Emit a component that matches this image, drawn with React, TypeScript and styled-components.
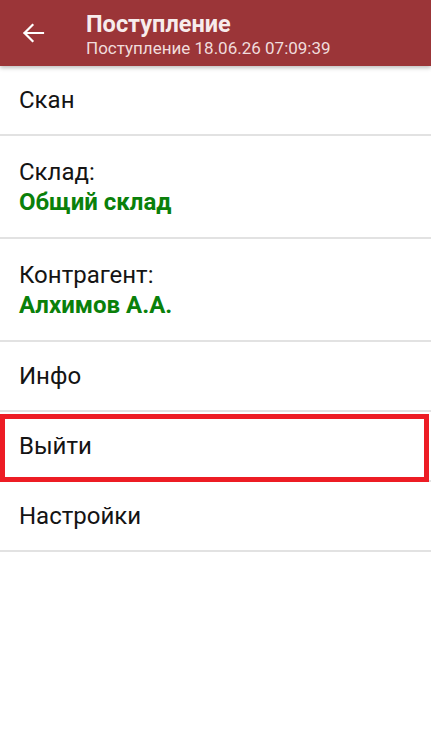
import styled, { createGlobalStyle } from "styled-components";

const GlobalStyle = createGlobalStyle`
    body {
        margin: 0;
        background: #ffffff;
        font-family: Roboto, "Noto Sans", sans-serif;
    }
`;

export default function App() {
    return (
        <Screen>
            <GlobalStyle />
            <Header>
                <BackButton aria-label="Назад">
                    <svg width="24" height="24" viewBox="0 0 24 24" fill="none">
                        <path d="M22 12H3.5M11.5 4l-8 8 8 8" stroke="#ffffff" strokeWidth="2.2" strokeLinecap="square" />
                    </svg>
                </BackButton>
                <Titles>
                    <Title>Поступление</Title>
                    <Subtitle>Поступление 18.06.26 07:09:39</Subtitle>
                </Titles>
            </Header>
            <Menu>
                <Row>
                    <Label>Скан</Label>
                </Row>
                <Row $tall>
                    <Label>Склад:</Label>
                    <Value>Общий склад</Value>
                </Row>
                <Row $tall>
                    <Label>Контрагент:</Label>
                    <Value>Алхимов А.А.</Value>
                </Row>
                <Row>
                    <Label>Инфо</Label>
                </Row>
                <Row $marked>
                    <Label>Выйти</Label>
                </Row>
                <Row>
                    <Label>Настройки</Label>
                </Row>
            </Menu>
        </Screen>
    );
}

const Screen = styled.div`
    width: 431px;
    min-height: 739px;
    background: #ffffff;
`;

const Header = styled.header`
    height: 66px;
    display: flex;
    align-items: center;
    background: #9b3538;
    box-shadow: 0 2px 4px rgba(0, 0, 0, 0.25);
    position: relative;
    z-index: 1;
`;

const BackButton = styled.button`
    width: 66px;
    height: 66px;
    display: flex;
    align-items: center;
    justify-content: center;
    padding: 0;
    border: none;
    background: transparent;
    cursor: pointer;
`;

const Titles = styled.div`
    display: flex;
    flex-direction: column;
    margin-left: 20px;
    margin-top: 4px;
    color: #ffffff;
`;

const Title = styled.span`
    font-size: 23.5px;
    font-weight: 700;
    line-height: 27px;
    color: #f7ecec;
`;

const Subtitle = styled.span`
    font-size: 17px;
    line-height: 21px;
    color: #f0dcdc;
`;

const Menu = styled.div`
    display: flex;
    flex-direction: column;
`;

const Row = styled.div<{ $tall?: boolean; $marked?: boolean }>`
    display: flex;
    flex-direction: column;
    justify-content: center;
    height: ${({ $tall }) => ($tall ? "101px" : "68px")};
    padding: 0 19px;
    border-bottom: 2px solid #e2e2e2;
    position: relative;

    ${({ $marked }) =>
        $marked &&
        `
        &::after {
            content: "";
            position: absolute;
            top: 2px;
            bottom: -2px;
            left: 0;
            right: 2px;
            border: 5px solid #ed1c24;
        }
    `}
`;

const Label = styled.span`
    font-size: 24px;
    line-height: 30px;
    color: #141414;
`;

const Value = styled.span`
    font-size: 24px;
    line-height: 30px;
    font-weight: 700;
    color: #0a800a;
`;
